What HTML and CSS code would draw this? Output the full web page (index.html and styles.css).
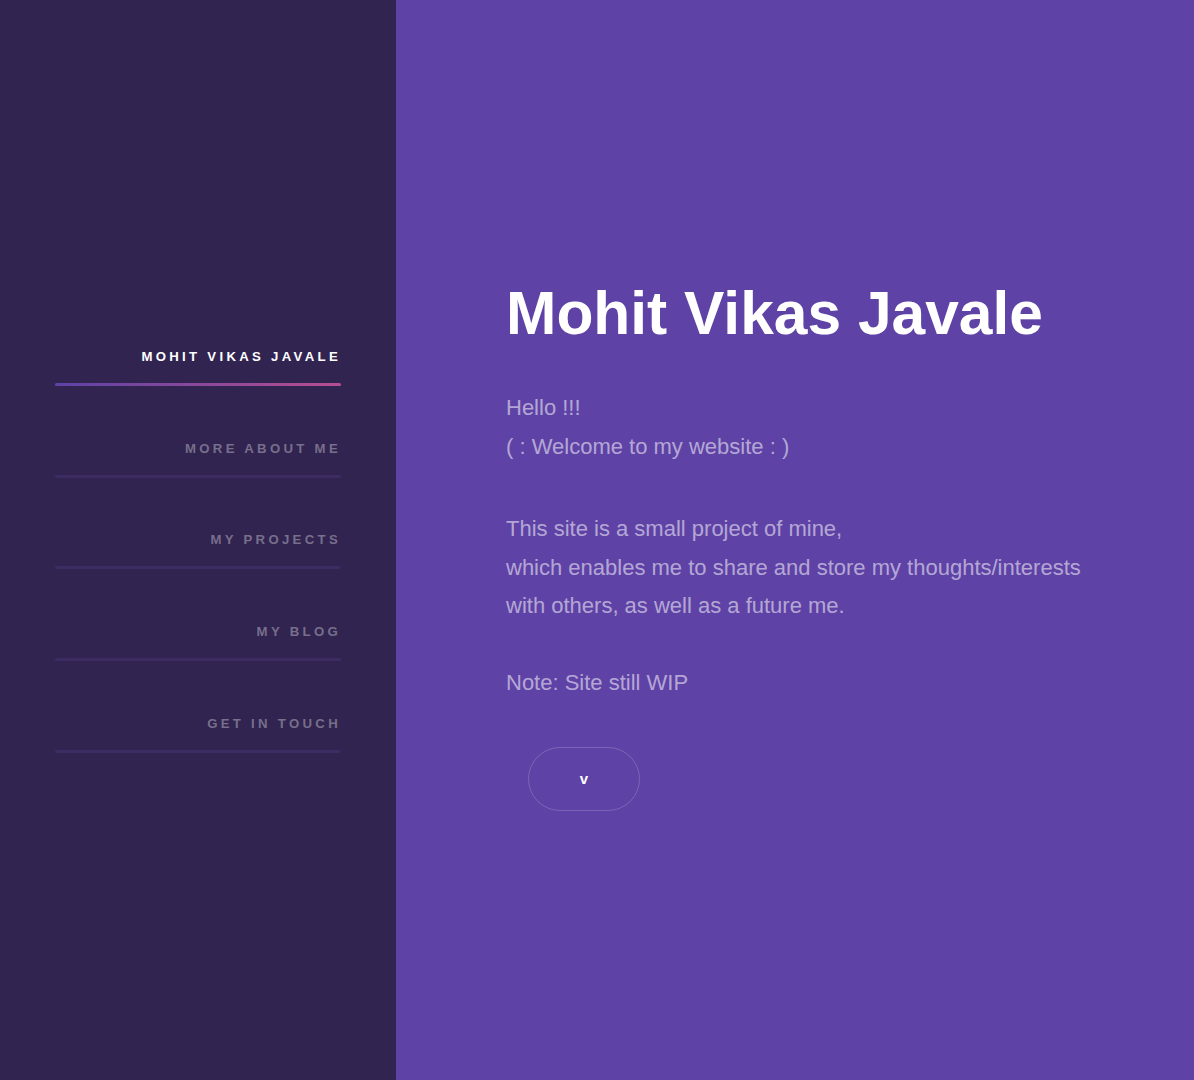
FILE: index.html
```html
<!DOCTYPE html>
<html lang="en">
<head>
<meta charset="utf-8">
<title>Mohit Vikas Javale</title>
<link rel="stylesheet" href="styles.css">
</head>
<body>
<aside class="sidebar">
  <nav class="nav">
    <ul class="nav-list">
      <li class="nav-item"><a class="nav-link active" href="#intro">Mohit Vikas Javale</a></li>
      <li class="nav-item"><a class="nav-link" href="#one">More About Me</a></li>
      <li class="nav-item"><a class="nav-link" href="#two">My Projects</a></li>
      <li class="nav-item"><a class="nav-link" href="#three">My Blog</a></li>
      <li class="nav-item"><a class="nav-link" href="#four">Get In Touch</a></li>
    </ul>
  </nav>
</aside>
<main class="main">
  <section class="intro">
    <h1 class="title">Mohit Vikas Javale</h1>
    <p class="text">Hello !!!<br>( : Welcome to my website : )</p>
    <p class="text">This site is a small project of mine,<br>which enables me to share and store my thoughts/interests<br>with others, as well as a future me.<br><br>Note: Site still WIP</p>
    <div class="actions">
      <a class="button" href="#one">v</a>
    </div>
  </section>
</main>
</body>
</html>
```

FILE: styles.css
```css
html, body {
  margin: 0;
  padding: 0;
}

body {
  display: flex;
  min-height: 1080px;
  background: #5e42a6;
  font-family: "Liberation Sans", Arial, Helvetica, sans-serif;
  font-size: 22px;
  line-height: 1.75;
  color: rgba(255, 255, 255, 0.55);
}

.sidebar {
  width: 396px;
  flex: 0 0 396px;
  background: #312450;
  display: flex;
  flex-direction: column;
  justify-content: center;
  padding: 0 55px;
  box-sizing: border-box;
  height: 1080px;
}

.nav-list {
  list-style: none;
  margin: 0;
  padding: 0;
}

.nav-item {
  margin: 33px 0 0 0;
}

.nav-item:first-child {
  margin-top: 0;
}

.nav-link {
  display: block;
  position: relative;
  font-size: 13.2px;
  font-weight: bold;
  letter-spacing: 3.3px;
  line-height: 1;
  padding: 22.8px 0;
  text-align: right;
  text-transform: uppercase;
  text-decoration: none;
  color: rgba(255, 255, 255, 0.35);
}

.nav-link::before,
.nav-link::after {
  content: "";
  position: absolute;
  left: 0;
  bottom: 0;
  width: 100%;
  height: 3px;
  border-radius: 1.5px;
}

.nav-link::before {
  background: #3c2c62;
}

.nav-link.active {
  color: #ffffff;
}

.nav-link.active::after {
  background-image: linear-gradient(to right, #5e42a6, #b74e91);
}

.main {
  flex: 1;
  display: flex;
  flex-direction: column;
  justify-content: center;
  padding: 11px 0 0 110px;
  box-sizing: border-box;
  height: 1080px;
}

.title {
  margin: 0 0 42px 0;
  font-size: 60.5px;
  line-height: 1.1;
  font-weight: bold;
  color: #ffffff;
}

.text {
  margin: 0 0 44px 0;
}

.actions {
  display: flex;
  padding-left: 22px;
}

.button {
  display: flex;
  align-items: center;
  justify-content: center;
  width: 112px;
  height: 64px;
  box-sizing: border-box;
  border: 1px solid rgba(255, 255, 255, 0.18);
  border-radius: 32px;
  font-size: 15px;
  font-weight: bold;
  color: #ffffff;
  text-decoration: none;
  line-height: 1;
}
```
